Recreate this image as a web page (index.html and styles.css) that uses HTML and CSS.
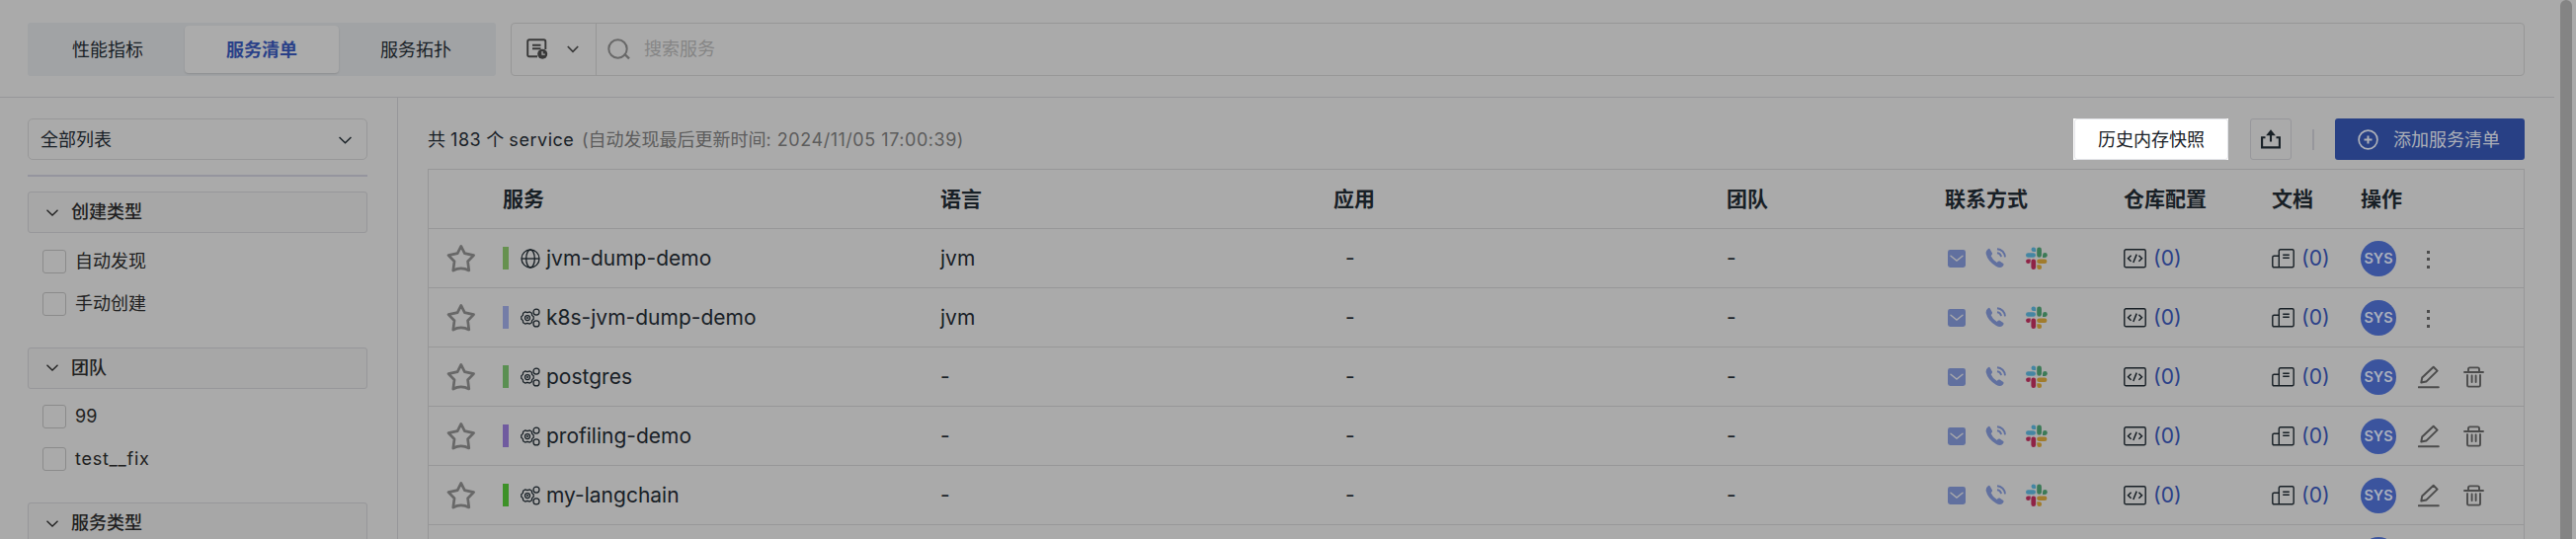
FILE: index.html
```
<!DOCTYPE html>
<html lang="zh-CN">
<head>
<meta charset="utf-8">
<title>服务清单</title>
<link rel="stylesheet" href="styles.css">
</head>
<body>
<svg class="defs" width="0" height="0" aria-hidden="true">
  <symbol id="chev" viewBox="0 0 12 7"><path d="M.5 .7 6 6 11.5 .7" fill="none" stroke="currentColor" stroke-width="1.3"/></symbol>
  <symbol id="star" viewBox="0 0 30 30"><path d="M14.8 2.4 18.4 9.6 27.6 11.6 21.6 17.8 22.8 27 Q18.8 24.8 14.8 24.8 Q10.8 24.8 6.8 27 L8 17.8 2 11.6 11.2 9.6Z" fill="none" stroke="currentColor" stroke-width="2.7" stroke-linejoin="round"/></symbol>
  <symbol id="globe" viewBox="0 0 20 20"><g fill="none" stroke="currentColor" stroke-width="1.3"><circle cx="10" cy="10" r="9"/><ellipse cx="10" cy="10" rx="4.3" ry="9"/><path d="M1 10H19"/></g></symbol>
  <symbol id="gears" viewBox="0 0 20 20"><g fill="none" stroke="currentColor" stroke-width="1.25"><path d="M4.6 3.9 7 4.7 9.4 3.9 11.4 5.2 11.6 7.4 13.2 8.8V11.2L11.6 12.6 11.4 14.8 9.4 16.1 7 15.3 4.6 16.1 2.6 14.8 2.4 12.6 .8 11.2V8.8L2.4 7.4 2.6 5.2Z" stroke-linejoin="round"/><circle cx="7" cy="10" r="2.5"/><circle cx="7" cy="10" r=".4"/><circle cx="16" cy="4.1" r="3"/><circle cx="16" cy="15.9" r="3"/></g></symbol>
  <symbol id="mail" viewBox="0 0 18 18"><rect width="18" height="18" rx="2.4" fill="#61709f"/><path d="M3 6.2 9 11 15 6.2" fill="none" stroke="#a9a9ac" stroke-width="1.4" stroke-linecap="round"/></symbol>
  <symbol id="phone" viewBox="0 0 21 21"><path d="M4.6 1.2 7 5.6Q7.3 6.8 5.7 8.2 7.6 12.6 11.7 14.9 13.2 13.2 14.5 13.6L18.2 16Q19.2 17.2 17.6 18.7 15 21.4 10.8 18.7 2.6 14 .8 6.6 .1 3 2.8 1.2 4 .4 4.6 1.2Z" fill="#61709f"/><path d="M12 1.2A8.5 8.5 0 0 1 20 9.4M12 5.2A4.5 4.5 0 0 1 16 9.2" fill="none" stroke="#61709f" stroke-width="1.9"/></symbol>
  <symbol id="slack" viewBox="0 0 22 24"><g fill="#4486a3"><rect x="0" y="6.2" width="10" height="4.6" rx="2.3"/><path d="M5.5 2.8a2.3 2.3 0 0 1 4.6 0V5H7.8A2.3 2.3 0 0 1 5.5 2.8Z"/></g><g fill="#3c7a57"><rect x="11.2" y=".5" width="4.7" height="10.3" rx="2.3"/><path d="M17 8.5a2.4 2.4 0 1 1 2.4 2.4H17Z"/></g><g fill="#a17c2d"><rect x="11.2" y="12.5" width="10.2" height="4.6" rx="2.3"/><path d="M11.3 18.3h2.3a2.4 2.4 0 1 1-2.3 2.4Z"/></g><g fill="#8f2346"><rect x="5.4" y="12.5" width="4.7" height="10.6" rx="2.3"/><path d="M4.7 12.5v2.3a2.3 2.3 0 1 1-2.3-2.3Z"/></g></symbol>
  <symbol id="code" viewBox="0 0 23 20"><g fill="none" stroke="currentColor" stroke-width="1.4"><rect x=".8" y=".8" width="21.4" height="18" rx="1.6"/><path d="M7.6 6.8 4.5 9.8 7.6 12.8M15.4 6.8 18.5 9.8 15.4 12.8M13.2 5.6 9.8 14" stroke-width="1.5"/></g></symbol>
  <symbol id="doc" viewBox="0 0 23 20"><g fill="none" stroke="currentColor" stroke-width="1.4"><path d="M7.3 18.8V2.3Q7.3 .8 8.8 .8H20.7Q22.2 .8 22.2 2.3V17.3Q22.2 18.8 20.7 18.8H2.3Q.8 18.8 .8 17.3V8.7Q.8 7.2 2.3 7.2H7.3M11.2 6.2H17.8M11.2 9.3H17.8"/></g></symbol>
  <symbol id="edit" viewBox="0 0 22 24"><g fill="none" stroke="currentColor" stroke-width="2" stroke-linejoin="round"><path d="M3.3 17.6 4.2 12.6 15.7 1.8 19.6 5.6 8.3 16.6ZM.8 22.3H20.8" stroke-linecap="round"/></g></symbol>
  <symbol id="trash" viewBox="0 0 21 22"><g fill="none" stroke="currentColor" stroke-width="1.9" stroke-linecap="round" stroke-linejoin="round"><path d="M1 6H20M5 5.5V3Q5 1.4 6.6 1.4H14.4Q16 1.4 16 3V5.5M4 9V19.3Q4 20.6 5.3 20.6H15.7Q17 20.6 17 19.3V9M8.6 9.5V16M12.6 9.5V16"/></g></symbol>
</svg>
<div class="page">
  <header class="top">
    <nav class="tabs"><span class="tab">性能指标</span><span class="tab tab-on">服务清单</span><span class="tab">服务拓扑</span></nav>
    <div class="search">
      <div class="mode">
        <svg width="22" height="22" viewBox="0 0 22 22"><path d="M11 18.3H3Q1.2 18.3 1.2 16.5V3Q1.2 1.2 3 1.2H17.5Q19.3 1.2 19.3 3V11M6 6.7H14.5M6 10.3H14.5" fill="none" stroke="currentColor" stroke-width="1.9"/><circle cx="16.2" cy="15.8" r="5" fill="currentColor"/><path d="M16 13V16.2H18.8" fill="none" stroke="#aaa" stroke-width="1.3"/></svg>
        <svg class="mode-chev" width="12" height="8" viewBox="0 0 12 8"><path d="M.8 1 6 6.3 11.2 1" fill="none" stroke="currentColor" stroke-width="1.7"/></svg>
      </div>
      <div class="field">
        <svg width="24" height="22" viewBox="0 0 24 22"><g fill="none" stroke="currentColor" stroke-width="2"><circle cx="10.5" cy="10.5" r="9.2"/><path d="M17 15.5 22 20.3" stroke-width="2.4"/></g></svg>
        <span>搜索服务</span>
      </div>
    </div>
  </header>
  <div class="body">
    <aside class="side">
      <div class="select"><span>全部列表</span><svg width="13" height="8"><use href="#chev"/></svg></div>
      <hr class="rule">
      <section class="group"><h3 class="group-head"><svg width="12" height="7"><use href="#chev"/></svg>创建类型</h3>
        <label class="check"><i class="box"></i>自动发现</label><label class="check"><i class="box"></i>手动创建</label></section>
      <section class="group"><h3 class="group-head"><svg width="12" height="7"><use href="#chev"/></svg>团队</h3>
        <label class="check"><i class="box"></i>99</label><label class="check"><i class="box"></i><span class="wide">test__fix</span></label></section>
      <section class="group"><h3 class="group-head"><svg width="12" height="7"><use href="#chev"/></svg>服务类型</h3></section>
    </aside>
    <main class="main">
      <div class="bar">
        <p class="count">共 <span class="latin">183</span> 个 <span class="latin">service </span><span class="updated">(自动发现最后更新时间<span class="latin">: 2024/11/05 17:00:39)</span></span></p>
        <div class="snapshot"><span class="snapshot-btn">历史内存快照</span></div>
        <div class="export"><svg width="20" height="20" viewBox="0 0 20 20"><path d="M4.5 8.2H1.1V18.4H18.9V8.2H15.5M10 12.5V3" fill="none" stroke="currentColor" stroke-width="2.1"/><path d="M5.2 6.3 10 .3 14.8 6.3Z" fill="currentColor"/></svg></div>
        <i class="sep"></i>
        <div class="add"><svg width="21" height="21" viewBox="0 0 21 21"><g fill="none" stroke="currentColor" stroke-width="1.7"><circle cx="10.5" cy="10.5" r="9.4"/><path d="M10.5 6.5V14.5M6.5 10.5H14.5" stroke-width="2"/></g></svg><span>添加服务清单</span></div>
      </div>
      <div class="table" id="table">
        <div class="row head"><span></span><span>服务</span><span>语言</span><span>应用</span><span>团队</span><span>联系方式</span><span>仓库配置</span><span>文档</span><span>操作</span></div>
      </div>
    </main>
  </div>
  <div class="scroll"></div>
</div>
<script src="rows.js"></script>
</body>
</html>
```
FILE: styles.css
```
* { box-sizing: border-box; }
body { margin: 0; background: #aaaaaa; color: #182026; font: 18px/24px Inter, "Noto Sans CJK SC", sans-serif; }
svg { display: block; flex: none; }
.defs { position: absolute; }
.page { position: relative; width: 2608px; height: 546px; overflow: hidden; }
.top { width: 2586px; height: 99px; padding: 23px 30px 21px 28px; border-bottom: 1px solid #97979a; display: flex; gap: 15px; }
.tabs { width: 474px; height: 54px; padding: 3px; display: flex; background: #a1a3a5; border-radius: 3px; }
.tab { flex: 1; padding-top: 1px; display: flex; align-items: center; justify-content: center; border-radius: 4px; }
.tab-on { background: #ababab; color: #294088; font-weight: 700; box-shadow: 0 1px 2px rgba(0,0,0,.13); }
.search { flex: 1; display: flex; border: 1px solid #979797; border-radius: 4px; }
.mode { width: 86px; padding-left: 15px; display: flex; align-items: center; color: #383838; border-right: 1px solid #979797; }
.mode-chev { margin-left: 19px; }
.field { display: flex; align-items: center; gap: 13px; padding-left: 11px; color: #686868; }
.field span { color: #858585; }
.body { display: flex; width: 2586px; height: 447px; }
.side { width: 403px; padding: 21px 30px 0 28px; border-right: 1px solid #97979a; color: #202020; flex: none; }
.select { height: 42px; padding: 1px 15px 0 12px; border: 1px solid #989899; border-radius: 5px; display: flex; align-items: center; justify-content: space-between; color: #182026; }
.rule { height: 2px; margin: 15px 0; border: 0; background: #95959e; }
.group { height: 157.5px; }
.group-head { height: 42px; margin: 0 0 9px; padding-left: 18px; border: 1px solid #97979a; border-radius: 3px; background: #a7a7a7; display: flex; align-items: center; gap: 13px; font-size: 18px; font-weight: 500; }
.check { height: 43px; padding: 0 0 4px 15px; display: flex; align-items: center; gap: 9px; }
.box { width: 24px; height: 24px; border: 1px solid #8b8b8b; border-radius: 3px; flex: none; }
.wide { letter-spacing: .75px; }
.main { flex: 1; padding: 21px 30px 0 30px; }
.bar { height: 42px; margin-bottom: 9px; display: flex; align-items: center; }
.count { margin: 0 auto 0 0; padding-top: 2px; white-space: pre; }
.latin { letter-spacing: .53px; }
.updated { margin-left: 2px; color: #5c5c5c; }
.snapshot { width: 157px; height: 42px; background: #fff; display: flex; padding-left: 1px; }
.snapshot-btn { flex: 1; padding-top: 2px; display: flex; align-items: center; justify-content: center; border: 1px solid #e3e4e8; border-radius: 3px; }
.export { width: 42px; height: 42px; margin-left: 22px; border: 1px solid #97979b; border-radius: 3px; display: flex; align-items: center; justify-content: center; }
.sep { width: 2px; height: 21px; margin: 0 21px; background: #97979c; }
.add { width: 192px; height: 42px; padding-left: 23px; background: #284085; color: #adb0b8; border-radius: 3px; display: flex; align-items: center; gap: 15px; }
.add span { padding-top: 2px; }
.table { border: 1px solid #979798; height: 376px; overflow: hidden; font-size: 21px; }
.row { height: 60px; display: grid; grid-template-columns: 75px 443px 398px 398px 221px 181px 150px 90px 165px; align-items: center; border-bottom: 1px solid #979798; }
.head { font-weight: 700; }
.star { width: 30px; height: 30px; margin-left: 18px; color: #686868; }
.name { display: flex; align-items: center; }
.mark { width: 6px; height: 23px; margin-right: 12px; }
.name svg { margin-right: 6px; }
.app { padding-left: 12px; }
.contact { display: flex; align-items: center; padding-left: 3px; gap: 20px; }
.link { display: flex; align-items: center; gap: 7px; }
.link b { color: #294088; font-weight: 400; padding-top: 1px; }
.ops { display: flex; align-items: center; color: #4c4c4c; grid-column: 9; }
.sys { width: 36px; height: 36px; margin-right: 22px; border-radius: 50%; background: #3b549e; color: #abb0bd; font-size: 14.5px; font-weight: 600; display: flex; align-items: center; justify-content: center; }
.trash { margin-left: 24px; }
.dots { margin-left: 9px; padding-top: 2px; display: grid; gap: 4.5px; }
.dots i { width: 3px; height: 3px; background: #4c4c4c; }
.scroll { position: absolute; left: 2592px; top: 0; width: 12px; height: 570px; border-radius: 6px; background: #848484; }
```
FILE: rows.js
```
const services = [
  ['jvm-dump-demo', '#66914f', 'globe', 'jvm', false],
  ['k8s-jvm-dump-demo', '#747da7', 'gears', 'jvm', false],
  ['postgres', '#5a8f52', 'gears', '-', true],
  ['profiling-demo', '#705b9f', 'gears', '-', true],
  ['my-langchain', '#3d9128', 'gears', '-', true]
];
const icon = (id, w, h, cls = '') => `<svg class="${cls}" width="${w}" height="${h}"><use href="#${id}"/></svg>`;
document.getElementById('table').insertAdjacentHTML('beforeend', services.map(([name, color, type, lang, editable]) => `
  <div class="row">
    ${icon('star', 30, 30, 'star')}
    <span class="name"><i class="mark" style="background:${color}"></i>${icon(type, 20, 20)}${name}</span>
    <span>${lang}</span><span class="app">-</span><span>-</span>
    <span class="contact">${icon('mail', 18, 18)}${icon('phone', 21, 21)}${icon('slack', 22, 24)}</span>
    <span class="link">${icon('code', 23, 20)}<b>(0)</b></span>
    <span class="link">${icon('doc', 23, 20)}<b>(0)</b></span>
    <span class="ops"><span class="sys">SYS</span>${editable
      ? icon('edit', 22, 24) + icon('trash', 21, 22, 'trash')
      : '<span class="dots"><i></i><i></i><i></i></span>'}</span>
  </div>`).join('') + '<div class="row"><span class="ops"><span class="sys"></span></span></div>');
```
